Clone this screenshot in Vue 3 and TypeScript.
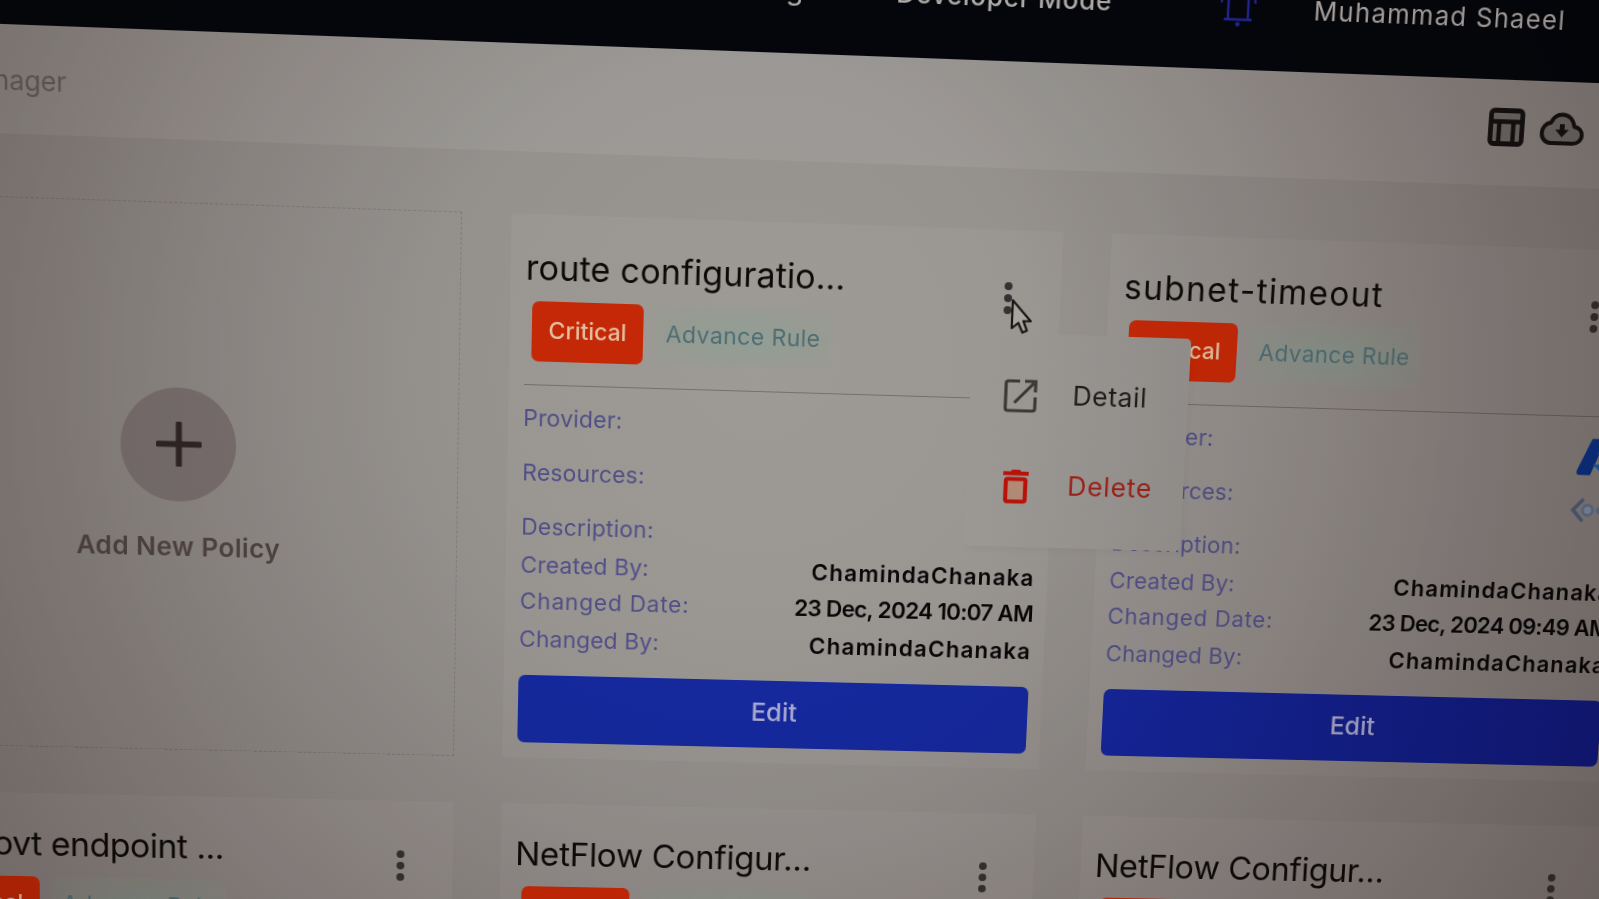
<script setup lang="ts">
interface Policy {
  title: string
  changedDate: string
  createdBy: string
  changedBy: string
  logos: boolean
}

const author = 'ChamindaChanaka'
const make = (title: string, changedDate: string, logos = false): Policy => ({
  title,
  changedDate,
  createdBy: author,
  changedBy: author,
  logos,
})

const policies: Policy[] = [
  make('route configuratio...', '23 Dec, 2024 10:07 AM'),
  make('subnet-timeout', '23 Dec, 2024 09:49 AM', true),
  make('test-govt endpoint ...', '23 Dec, 2024 09:40 AM'),
  make('NetFlow Configur...', '23 Dec, 2024 09:32 AM'),
  make('NetFlow Configur...', '23 Dec, 2024 09:30 AM'),
]

/* Perspective of the tilted display: maps a page rectangle onto four screen points. */
type Point = [number, number]
function project(x0: number, y0: number, w: number, h: number, q: [Point, Point, Point, Point]): string {
  const [tl, tr, bl, br] = q
  const dx1 = tr[0] - br[0]
  const dx2 = bl[0] - br[0]
  const sx = tl[0] - tr[0] + br[0] - bl[0]
  const dy1 = tr[1] - br[1]
  const dy2 = bl[1] - br[1]
  const sy = tl[1] - tr[1] + br[1] - bl[1]
  const det = dx1 * dy2 - dx2 * dy1
  const G = (sx * dy2 - dx2 * sy) / det
  const H = (dx1 * sy - sx * dy1) / det
  const a = (tr[0] - tl[0] + G * tr[0]) / w
  const b = (bl[0] - tl[0] + H * bl[0]) / h
  const d = (tr[1] - tl[1] + G * tr[1]) / w
  const e = (bl[1] - tl[1] + H * bl[1]) / h
  const g = G / w
  const k = H / h
  const c = tl[0] - a * x0 - b * y0
  const f = tl[1] - d * x0 - e * y0
  const i = 1 - g * x0 - k * y0
  const m = [a, d, 0, g, b, e, 0, k, 0, 0, 1, 0, c, f, 0, i].map((n) => n / i)
  m[10] = 1
  return `matrix3d(${m.map((n) => n.toFixed(9)).join(',')})`
}

const projection = project(630, 140, 1081, 830, [
  [530, 43.5],
  [1610, 83.5],
  [515, 865],
  [1549, 886],
])
</script>

<template>
  <div class="stage">
    <div class="page" :style="{ transform: projection }">
      <nav class="navbar">
        <span class="nav-item first">g</span>
        <span class="nav-item mode">Developer Mode</span>
        <svg class="bell" viewBox="0 0 36 44">
          <path d="M8 36V17C8 9 12 5 18 5s10 4 10 12v19M4 36h28M1 20c0-4 1-8 3-11M35 20c0-4-1-8-3-11" fill="none" stroke="#23279a" stroke-width="2.4" />
          <circle cx="18" cy="40.5" r="2.2" fill="#23279a" />
        </svg>
        <span class="nav-item user">Muhammad Shaeel</span>
      </nav>

      <header class="toolbar">
        <span class="crumb">Policy Manager</span>
        <div class="tools">
          <svg width="37" height="38" viewBox="0 0 37 38">
            <rect x="2.5" y="2.5" width="32" height="33" rx="3.5" fill="#6f6b69" stroke="#151110" stroke-width="4.8" />
            <path d="M2 13.500h33M11 13.500V35M25.500 13.500V35" stroke="#151110" stroke-width="4.400" fill="none" />
          </svg>
          <svg width="45" height="34" viewBox="0 0 45 34">
            <path d="M11 31h23c5 0 9-3.600 9-8.300 0-4.700-3.400-7.900-8-8.400C33.500 7 28.500 2.500 22.300 2.500c-5.300 0-9.500 3.200-11.500 8.300C5.700 11.500 2 15.700 2 21.200 2 26.800 6 31 11 31z" fill="#6f6b69" stroke="#151110" stroke-width="4" stroke-linejoin="round" />
            <path d="M22.500 12v6" stroke="#151110" stroke-width="5" />
            <path d="M15.500 17.500h14l-7 7.500z" fill="#151110" />
          </svg>
        </div>
      </header>

      <main class="grid">
        <section class="add-card">
          <div class="circle">
            <svg width="45" height="45" viewBox="0 0 45 45"><path d="M22.500 2v41M2 22.500h41" stroke="#2f2526" stroke-width="6" stroke-linecap="round" /></svg>
          </div>
          <span class="add-label">Add New Policy</span>
        </section>

        <article v-for="(p, n) in policies" :key="n" class="card">
          <h2 class="title" :class="{ hyphenated: n === 1, endpoint: n === 2, netflow: n > 2 }">{{ p.title }}</h2>
          <svg class="dots" width="10" height="34" viewBox="0 0 10 34">
            <circle cx="5" cy="5" r="4" /><circle cx="5" cy="17" r="4" /><circle cx="5" cy="29" r="4" />
          </svg>
          <div class="badges">
            <span class="critical">Critical</span>
            <span class="rule">Advance Rule</span>
          </div>
          <hr class="divider" />
          <div class="row provider">
            <span>Provider:</span>
            <svg v-if="p.logos" width="45" height="44" viewBox="0 0 48 44">
              <path d="M16 2h15L16 42H4c-3 0-4-2-3-5z" fill="#0d3288" />
              <path d="M31 2l15 35c1 3 0 5-3 5H31L18 30h14l-9-12z" fill="#1360b4" />
            </svg>
          </div>
          <div class="row resources">
            <span>Resources:</span>
            <svg v-if="p.logos" width="48" height="28" viewBox="0 0 50 28">
              <path d="M14 2L3 14l11 12M36 2l11 12-11 12" fill="none" stroke="#505f7c" stroke-width="4" />
              <circle cx="19" cy="14" r="5.500" fill="#8390a4" stroke="#617290" stroke-width="3" />
              <circle cx="32" cy="14" r="4" fill="#617290" />
            </svg>
          </div>
          <div class="row description"><span>Description:</span></div>
          <div class="row created"><span>Created By:</span><b>{{ p.createdBy }}</b></div>
          <div class="row date"><span>Changed Date:</span><b class="when">{{ p.changedDate }}</b></div>
          <div class="row by"><span>Changed By:</span><b>{{ p.changedBy }}</b></div>
          <button class="edit">Edit</button>
        </article>
      </main>

      <div class="menu">
        <div class="menu-item">
          <svg width="36" height="36" viewBox="0 0 36 36">
            <path d="M17 3H5.500C4 3 3 4 3 5.500v25C3 32 4 33 5.500 33h25c1.500 0 2.500-1 2.500-2.500V19" fill="none" stroke="#3a3736" stroke-width="3.200" />
            <path d="M12 25L31 5M22 3h11v11" fill="none" stroke="#3a3736" stroke-width="3.200" />
          </svg>
          <span>Detail</span>
        </div>
        <div class="menu-item danger">
          <svg width="36" height="36" viewBox="0 0 36 36">
            <path d="M4 4.800h26" stroke="#b81209" stroke-width="4" />
            <path d="M11 4l2-3h8l2 3z" fill="#b81209" />
            <rect x="7" y="10.500" width="20" height="23" rx="2" fill="#b08a76" stroke="#b81209" stroke-width="4.200" />
          </svg>
          <span>Delete</span>
        </div>
      </div>

      <svg class="cursor" width="23" height="36" viewBox="0 0 23 36">
        <path d="M2 2v28l6.500-5.500 4.500 9.500 4.500-2-4-9.500H21z" fill="#a8a4a0" stroke="#161312" stroke-width="2.200" stroke-linejoin="round" />
      </svg>
    </div>
    <div class="light"></div>
  </div>
</template>

<style>
html,
body {
  margin: 0;
  overflow: hidden;
  background: #04060b;
}
</style>

<style scoped>
.stage {
  position: relative;
  width: 1599px;
  height: 899px;
  overflow: hidden;
  isolation: isolate;
  background: radial-gradient(ellipse 1050px 1050px at 760px 360px, #9a9792 0%, #96938f 25%, #8e8a87 48%, #85807d 72%, #7d7674 100%);
  font-family: Inter, 'Noto Sans', sans-serif;
}
.page {
  position: relative;
  width: 1860px;
  height: 1120px;
  overflow: hidden;
  transform-origin: 0 0;
}
/* Panel brightness falls off towards the edges */
.light {
  position: absolute;
  inset: 0;
  pointer-events: none;
  mix-blend-mode: multiply;
  background: radial-gradient(ellipse 1080px 1080px at 720px 380px, #ffffff 0%, #ffffff 30%, #f2efee 55%, #dcd5d4 82%, #cac2c0 100%);
}
.navbar {
  display: flex;
  align-items: flex-end;
  box-sizing: border-box;
  height: 140px;
  padding: 0 0 44px 880px;
  background: #04060b;
  color: #b4b1ae;
}
.nav-item {
  font-size: 26px;
  line-height: 32px;
  white-space: nowrap;
}
.first {
  width: 109px;
  margin-bottom: 2px;
  font-size: 28px;
}
.mode {
  width: 323px;
  margin-bottom: 2px;
  letter-spacing: 0.700px;
  font-weight: 500;
}
.bell {
  width: 36px;
  height: 44px;
  margin-bottom: -3px;
}
.user {
  margin: 0 0 0 58px;
  letter-spacing: 1.300px;
}
.toolbar {
  display: flex;
  align-items: center;
  justify-content: space-between;
  box-sizing: border-box;
  height: 105px;
  padding: 0 172px 11px 0;
  background: rgba(255, 255, 255, 0.06);
}
.crumb {
  display: flex;
  justify-content: flex-end;
  width: 180px;
  padding-top: 13px;
  white-space: nowrap;
  font-size: 26px;
  letter-spacing: -0.100px;
  color: #625a59;
}
.tools {
  display: flex;
  align-items: center;
  gap: 16px;
}
.grid {
  display: grid;
  grid-template-columns: repeat(3, 551px);
  grid-auto-rows: 551px;
  gap: 48.500px 49px;
  padding: 60.500px 0 0 15px;
}
.add-card {
  display: flex;
  flex-direction: column;
  align-items: center;
  box-sizing: border-box;
  padding: 182px 5px 0 0;
  border: 1.200px dashed rgba(60, 50, 50, 0.22);
}
.circle {
  display: flex;
  align-items: center;
  justify-content: center;
  width: 114px;
  height: 114px;
  border-radius: 50%;
  background: #776e6e;
}
.add-label {
  margin-top: 28px;
  font-size: 26px;
  line-height: 36px;
  font-weight: 600;
  letter-spacing: 0.400px;
  color: #4d4340;
}
.card {
  position: relative;
  box-sizing: border-box;
  padding: 30px 15px 0;
  background: rgba(255, 255, 255, 0.035);
}
.title {
  margin: 0;
  font-size: 34px;
  line-height: 46px;
  font-weight: 400;
  letter-spacing: 0.150px;
  color: #0c0908;
  white-space: nowrap;
}
.hyphenated {
  letter-spacing: 1.400px;
}
.endpoint {
  margin-left: -21px;
  letter-spacing: -0.500px;
}
.netflow {
  letter-spacing: -0.250px;
}
.dots {
  position: absolute;
  left: 493px;
  top: 51px;
  fill: #353130;
}
.badges {
  display: flex;
  align-items: center;
  height: 60px;
  margin: 10.500px 0 0 7px;
}
.critical,
.rule {
  display: flex;
  align-items: center;
  justify-content: center;
  box-sizing: border-box;
  height: 60px;
  padding-bottom: 3px;
  white-space: nowrap;
}
.critical {
  width: 111px;
  border-radius: 7px;
  background: #c42806;
  color: #e3bfa0;
  font-size: 23px;
  font-weight: 500;
}
.rule {
  width: 176px;
  margin-left: 12px;
  border-radius: 6px;
  background: radial-gradient(ellipse at center, rgba(112, 168, 150, 0.28) 0%, rgba(120, 160, 130, 0.19) 55%, rgba(130, 160, 130, 0.06) 100%);
  color: #4d6d72;
  font-size: 23px;
  letter-spacing: 0.450px;
}
.divider {
  margin: 22.500px 0 14px;
  border: 0;
  height: 1.200px;
  background: rgba(50, 44, 42, 0.38);
}
.row {
  display: flex;
  align-items: flex-start;
  justify-content: space-between;
  font-size: 23px;
  line-height: 38px;
  white-space: nowrap;
  letter-spacing: 0.200px;
  color: #504e86;
}
.row b {
  margin-right: -2px;
  color: #080606;
  font-weight: 600;
  letter-spacing: 1.200px;
}
.row b.when {
  letter-spacing: -0.700px;
}
.provider {
  height: 55.500px;
}
.provider svg {
  margin-top: 5px;
}
.resources {
  height: 55px;
}
.resources svg {
  margin-top: 13px;
}
.description {
  height: 39px;
}
.created {
  height: 37px;
}
.date {
  height: 39px;
  letter-spacing: 0.750px;
}
.by {
  height: 56px;
}
.edit {
  display: block;
  width: 522px;
  height: 69.500px;
  padding: 0 0 4px;
  border: 0;
  border-radius: 7px;
  background: #15289c;
  color: #a9aacf;
  font: 500 26px Inter, 'Noto Sans', sans-serif;
}
.card:nth-child(3n) .edit {
  background: linear-gradient(90deg, #14259a, #111a84);
}
.menu {
  position: absolute;
  left: 1079px;
  top: 409px;
  box-sizing: border-box;
  width: 222px;
  height: 217px;
  padding: 17px 0 0 33px;
  border-radius: 5px;
  background: linear-gradient(90deg, #9b9894, #94918e);
  box-shadow: 3px 4px 6px rgba(0, 0, 0, 0.03);
}
.menu-item {
  display: flex;
  align-items: center;
  gap: 35px;
  height: 92px;
  font-size: 27px;
  letter-spacing: 0.600px;
  color: #1f1b1a;
}
.menu-item span {
  margin-top: -4px;
}
.danger {
  color: #9c2018;
}
.danger span {
  margin-left: -1px;
  letter-spacing: 0.900px;
}
.cursor {
  position: absolute;
  left: 1116px;
  top: 374px;
}
</style>
